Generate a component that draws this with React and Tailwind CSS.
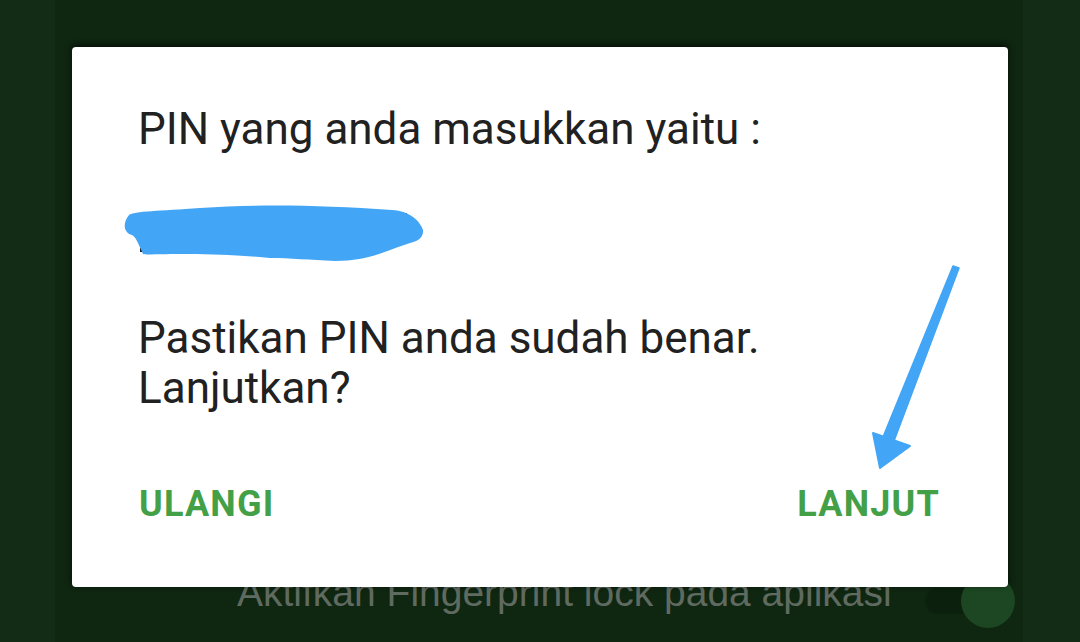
import React from "react";

function Scribble() {
  return (
    <svg width="310" height="62" viewBox="0 0 310 62" className="block">
      <rect x="20" y="46" width="5" height="4" fill="#222" />
      <rect x="282" y="11" width="5" height="3" fill="#222" />
      <path
        d="M9 13 C14 9 40 9 80 6 C140 2 200 3 272 8 C290 9 300 19 303 28 C304 37 295 40 290 41 C270 47 250 59 215 59 C190 58 170 56 150 56 C120 53 90 52 60 52 C40 52 25 53 23 52 C18 41 16 35 12 33 C4 31 2 22 9 13 Z"
        fill="#42a5f5"
      />
    </svg>
  );
}

export default function App() {
  return (
    <div
      className="relative w-[1080px] h-[642px] overflow-hidden flex bg-[#0f2611]"
      style={{ fontFamily: "Roboto, 'Noto Sans', sans-serif" }}
    >
      <div className="w-[55px] h-full bg-[#132c16]" />
      <div className="flex-1 h-full bg-[#0f2611] flex flex-col">
        <div className="mt-[571px] flex items-start pl-[182px] pr-[8px]">
          <span
            className="text-[39px] leading-[44px] text-[#5f6a60] whitespace-nowrap"
            style={{ fontFamily: "'Liberation Sans', Arial, sans-serif" }}
          >
            Aktifkan Fingerprint lock pada aplikasi
          </span>
          <div className="relative ml-auto mt-[3px] w-[90px] h-[54px] flex items-center">
            <div className="w-[70px] h-[26px] rounded-full bg-[#0c200e]" />
            <div className="absolute right-0 top-0 w-[54px] h-[54px] rounded-full bg-[#1c4722]" />
          </div>
        </div>
      </div>
      <div className="w-[57px] h-full bg-[#132c16]" />

      {/* dialog */}
      <div className="absolute left-[72px] top-[47px] w-[936px] h-[540px] bg-white rounded-[4px] shadow-[0_-2px_6px_rgba(0,0,0,0.7)] pt-[57px] pl-[66px] pr-[68px] flex flex-col">
        <div className="text-[44px] leading-[50px] text-[#212121] whitespace-nowrap">
          PIN yang anda masukkan yaitu :
        </div>
        <div className="mt-[48px] ml-[-18px]">
          <Scribble />
        </div>
        <div className="mt-[49px] text-[44px] leading-[50px] text-[#212121] whitespace-nowrap">
          <div>Pastikan PIN anda sudah benar.</div>
          <div>Lanjutkan?</div>
        </div>
        <div className="mt-[71px] flex justify-between items-center text-[36px] leading-[40px] font-bold text-[#43a047] tracking-[1.2px]">
          <span className="ml-[1px]">ULANGI</span>
          <span>LANJUT</span>
        </div>
      </div>

      {/* annotation arrow */}
      <svg
        className="absolute left-0 top-0 pointer-events-none"
        width="1080"
        height="642"
        viewBox="0 0 1080 642"
      >
        <path
          d="M953 266 L959 268 L894 441 L883 437 Z"
          fill="#42a5f5"
          stroke="#42a5f5"
          strokeWidth="1.5"
          strokeLinejoin="round"
        />
        <path
          d="M873 433 L910 446 L880 468 Z"
          fill="#42a5f5"
          stroke="#42a5f5"
          strokeWidth="2"
          strokeLinejoin="round"
        />
      </svg>
    </div>
  );
}
